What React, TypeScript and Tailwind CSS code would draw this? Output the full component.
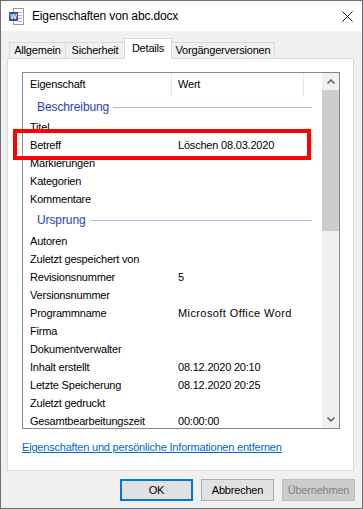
import React from 'react';

const font = { fontFamily: '"Liberation Sans", Arial, sans-serif' };

type Row = { kind: 'row'; name: string; value?: string; wide?: boolean } | { kind: 'group'; name: string; h: string };

const rows: Row[] = [
  { kind: 'group', name: 'Beschreibung', h: 'h-[22px]' },
  { kind: 'row', name: 'Titel' },
  { kind: 'row', name: 'Betreff', value: 'Löschen 08.03.2020' },
  { kind: 'row', name: 'Markierungen' },
  { kind: 'row', name: 'Kategorien' },
  { kind: 'row', name: 'Kommentare' },
  { kind: 'group', name: 'Ursprung', h: 'h-[24px]' },
  { kind: 'row', name: 'Autoren' },
  { kind: 'row', name: 'Zuletzt gespeichert von' },
  { kind: 'row', name: 'Revisionsnummer', value: '5' },
  { kind: 'row', name: 'Versionsnummer' },
  { kind: 'row', name: 'Programmname', value: 'Microsoft Office Word', wide: true },
  { kind: 'row', name: 'Firma' },
  { kind: 'row', name: 'Dokumentverwalter' },
  { kind: 'row', name: 'Inhalt erstellt', value: '08.12.2020 20:10' },
  { kind: 'row', name: 'Letzte Speicherung', value: '08.12.2020 20:25' },
  { kind: 'row', name: 'Zuletzt gedruckt' },
  { kind: 'row', name: 'Gesamtbearbeitungszeit', value: '00:00:00' },
];

const WordIcon = () => (
  <svg width="16" height="17" viewBox="0 0 16 17">
    <rect x="5.5" y="0.5" width="10" height="16" fill="#fff" stroke="#9a9a9a" />
    <line x1="10" y1="4.5" x2="14" y2="4.5" stroke="#a8a8a8" />
    <line x1="10" y1="7.5" x2="14" y2="7.5" stroke="#a8a8a8" />
    <line x1="10" y1="10.5" x2="14" y2="10.5" stroke="#a8a8a8" />
    <line x1="10" y1="13.5" x2="14" y2="13.5" stroke="#a8a8a8" />
    <rect x="1" y="4" width="9" height="9" fill="#2b579a" />
    <text x="5.5" y="11.2" fontSize="7" fontWeight="bold" fill="#fff" textAnchor="middle" fontFamily="Liberation Sans, Arial, sans-serif">W</text>
  </svg>
);

const Chevron = ({ up }: { up?: boolean }) => (
  <svg width="8" height="5" viewBox="0 0 8 5">
    <polyline
      points={up ? '0.5,4.5 4,1 7.5,4.5' : '0.5,0.5 4,4 7.5,0.5'}
      fill="none"
      stroke="#606060"
      strokeWidth="1.5"
    />
  </svg>
);

const Tab = ({ label, w, active, first }: { label: string; w: string; active?: boolean; first?: boolean }) => (
  <div
    className={
      active
        ? `${w} h-[21px] -mb-px -ml-px relative z-10 bg-white border border-b-0 border-[#d9d9d9] flex items-start justify-center pt-[2px] leading-[15px]`
        : `${w} h-[16px] ${first ? '' : '-ml-px'} bg-[#f0f0f0] border border-b-0 border-[#d9d9d9] flex items-center justify-center leading-[15px]`
    }
  >
    {label}
  </div>
);

export default function App() {
  return (
    <div
      style={font}
      className="relative w-[363px] h-[509px] border border-[#707070] bg-[#f0f0f0] flex flex-col text-[11px] tracking-[-0.2px] text-black overflow-hidden"
    >
      {/* title bar */}
      <div className="h-[30px] bg-white flex items-center pl-[7px] shrink-0">
        <WordIcon />
        <span className="ml-[8px] text-[12px] tracking-[-0.15px]">Eigenschaften von abc.docx</span>
        <svg className="ml-auto mr-[9px]" width="11" height="11" viewBox="0 0 11 11">
          <line x1="0.5" y1="0.5" x2="10.5" y2="10.5" stroke="#111" />
          <line x1="10.5" y1="0.5" x2="0.5" y2="10.5" stroke="#111" />
        </svg>
      </div>

      <div className="pl-[6px] pt-[7px] flex flex-col">
        {/* tabs */}
        <div className="flex items-end h-[20px] ml-[2px]">
          <Tab label="Allgemein" w="w-[57px]" first />
          <Tab label="Sicherheit" w="w-[60px]" />
          <Tab label="Details" w="w-[48px]" active />
          <Tab label="Vorgängerversionen" w="w-[104px]" />
        </div>

        {/* panel */}
        <div className="w-[347px] h-[413px] bg-white border border-[#d9d9d9] pl-[14px] pt-[13px] flex flex-col">
          <div className="w-[318px] h-[357px] border border-[#828790] flex">
            <div className="flex-1 overflow-hidden flex flex-col">
              <div className="h-[23px] flex shrink-0 leading-[23px]">
                <div className="w-[148px] pl-[7px]">Eigenschaft</div>
                <div className="w-px bg-[#e5e5e5]" />
                <div className="w-[131px] pl-[6px]">Wert</div>
                <div className="w-px bg-[#e5e5e5]" />
              </div>
              {rows.map((r, i) =>
                r.kind === 'group' ? (
                  <div key={i} className={`${r.h} shrink-0 flex items-center pl-[14px] text-[12px] tracking-[-0.1px] text-[#1f43b6]`}>
                    <span className="whitespace-nowrap">{r.name}</span>
                    <div className="flex-1 h-px bg-[#a9bbe2] ml-[4px] mr-[10px]" />
                  </div>
                ) : (
                  <div key={i} className="h-[18px] shrink-0 flex leading-[18px] whitespace-nowrap">
                    <div className="w-[149px] pl-[7px]">{r.name}</div>
                    <div className={r.wide ? 'pl-[6px] tracking-[0.4px]' : 'pl-[6px]'}>{r.value ?? ''}</div>
                  </div>
                )
              )}
            </div>
            {/* scrollbar */}
            <div className="w-[17px] bg-[#f0f0f0] flex flex-col">
              <div className="h-[17px] flex items-center justify-center">
                <Chevron up />
              </div>
              <div className="h-[141px] bg-[#cdcdcd]" />
              <div className="flex-1" />
              <div className="h-[17px] flex items-center justify-center">
                <Chevron />
              </div>
            </div>
          </div>
          <a className="mt-[11px] leading-[15px] text-[#0066cc] underline whitespace-nowrap cursor-pointer">
            Eigenschaften und persönliche Informationen entfernen
          </a>
        </div>
      </div>

      {/* buttons */}
      <div className="flex justify-end gap-[8px] pr-[7px] mt-[8px]">
        <button className="w-[73px] h-[22px] bg-[#e1e1e1] border-2 border-[#0078d7] text-[11px]">OK</button>
        <button className="w-[73px] h-[22px] bg-[#e1e1e1] border border-[#adadad] text-[11px]">Abbrechen</button>
        <button className="w-[73px] h-[22px] bg-[#cccccc] border border-[#bfbfbf] text-[11px] text-[#838383]">Übernehmen</button>
      </div>

      {/* red highlight */}
      <div className="absolute left-[12px] top-[128px] w-[298px] h-[31px] border-4 border-[#ff0000] pointer-events-none" />
    </div>
  );
}
